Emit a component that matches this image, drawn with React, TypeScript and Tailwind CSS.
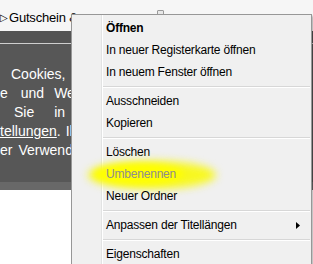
import { ReactNode } from 'react'

const font = { fontFamily: '"Liberation Sans", Arial, sans-serif' }

function Item({ children, bold, disabled, sub }: { children: ReactNode; bold?: boolean; disabled?: boolean; sub?: boolean }) {
  return (
    <div className="relative flex h-[22px] items-center pl-[34px] pr-4">
      <span className={`text-[12px] tracking-[-0.2px] ${bold ? 'font-bold text-black' : disabled ? 'text-[#8d8d8d]' : 'text-black'}`}>{children}</span>
      {sub && (
        <svg className="absolute right-[11px] top-[8px]" width="4" height="7" viewBox="0 0 4 7">
          <path d="M0 0 L4 3.5 L0 7 Z" fill="#000" />
        </svg>
      )}
    </div>
  )
}

function Sep() {
  return (
    <div className="ml-[31px] mr-[1px] flex h-[7px] flex-col justify-center">
      <div className="h-px bg-[#d7d7d7]" />
      <div className="h-px bg-white" />
    </div>
  )
}

function App() {
  return (
    <div className="relative h-[264px] w-[313px] overflow-hidden bg-white" style={font}>
      {/* page behind the menu */}
      <div className="h-[31px] bg-[#f6f6f6]">
        <div className="flex h-[31px] w-[72px] items-end whitespace-nowrap pb-[6px] text-[13px] leading-[15px] text-black">
          <span className="text-[10px]">▷</span>
          <span className="ml-[1px] tracking-[-0.2px]">Gutschein &amp;</span>
        </div>
      </div>
      <div className="h-[12px] bg-[#545454]" />
      <div className="h-px bg-[#cfcfcf]" />
      <div className="h-[138px] bg-[#575757] pt-[21px] text-[14px] leading-[19px] text-white">
        <div className="flex whitespace-nowrap"><span className="ml-[11px]">Cookies,</span></div>
        <div className="flex whitespace-nowrap"><span>e</span><span className="ml-[13px]">und</span><span className="ml-[10px]">Werbung</span></div>
        <div className="flex whitespace-nowrap"><span className="ml-[14px]">Sie</span><span className="ml-[20px]">in</span><span className="ml-[14px]">den</span></div>
        <div className="flex whitespace-nowrap"><span className="underline">tellungen</span><span>.</span><span className="ml-[5px]">Ihre</span></div>
        <div className="flex whitespace-nowrap"><span>er</span><span className="ml-[6px]">Verwendung</span></div>
      </div>
      <div className="h-[8px] bg-[#686868]" />

      <div className="absolute left-[157px] top-[10px] h-[5px] w-[7px] rounded-t-[1px] border border-[#9a9a9a] bg-[#e8e8e8]" />

      {/* context menu */}
      <div className="absolute left-[71px] top-[14px] z-10 w-[241px] border border-[#979797] bg-[#f0f0f0] pt-[2px] shadow-[2px_2px_2px_rgba(0,0,0,0.25)]">
        <div className="absolute bottom-0 left-[29px] top-0 w-px bg-[#e2e3e3]" />
        <div className="absolute bottom-0 left-[30px] top-0 w-px bg-white" />
        <Item bold>Öffnen</Item>
        <Item>In neuer Registerkarte öffnen</Item>
        <Item>In neuem Fenster öffnen</Item>
        <Sep />
        <Item>Ausschneiden</Item>
        <Item>Kopieren</Item>
        <Sep />
        <Item>Löschen</Item>
        <div className="relative">
          <div className="pointer-events-none absolute left-[16px] top-[-2px] h-[28px] w-[128px] rounded-[50%] bg-[#f8f820] blur-[4px]" />
          <div className="pointer-events-none absolute left-[22px] top-[1px] h-[20px] w-[90px] rounded-[50%] bg-[#ffff00] blur-[3px]" />
          <div className="relative"><Item disabled>Umbenennen</Item></div>
        </div>
        <Item>Neuer Ordner</Item>
        <Sep />
        <Item sub>Anpassen der Titellängen</Item>
        <Sep />
        <Item>Eigenschaften</Item>
        <div className="h-[20px]" />
      </div>
    </div>
  )
}

export default App
